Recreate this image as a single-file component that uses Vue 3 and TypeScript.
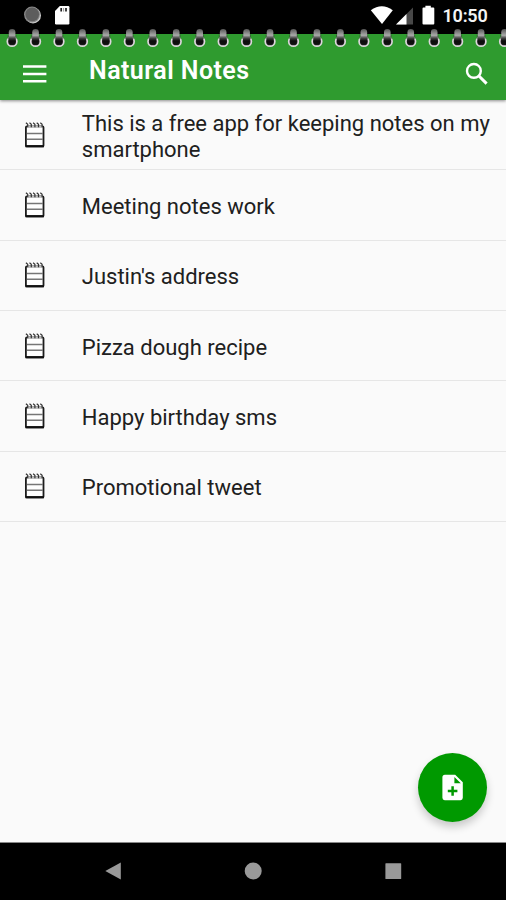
<script setup lang="ts">
const notes: string[] = [
  'This is a free app for keeping notes on my smartphone',
  'Meeting notes work',
  "Justin's address",
  'Pizza dough recipe',
  'Happy birthday sms',
  'Promotional tweet',
]
const rings: number[] = Array.from({ length: 22 }, (_, i) => 12.1 + i * 23.45)
const spikes: number[] = [3.4, 7, 10.6, 14.2, 17.8]
</script>

<template>
  <div class="screen">
    <div class="status">
      <svg class="status-left" width="80" height="34" viewBox="0 0 80 34">
        <circle cx="33" cy="15.4" r="8" fill="#d0d0d0" />
        <circle cx="32" cy="14.6" r="8" fill="#888" />
        <circle cx="32.2" cy="14.4" r="6.8" fill="#5d5d5d" />
        <path d="M59.8 6H68.2Q69.4 6 69.4 7.2V23.3Q69.4 24.5 68.2 24.5H56.2Q55 24.5 55 23.3V11Z" fill="#fff" />
        <path d="M61.2 8v3.6M66 8v3.6" stroke="#222" stroke-width="1.7" />
        <path d="M63.6 8v3.6" stroke="#999" stroke-width="1" />
      </svg>
      <svg class="status-right" width="66" height="34" viewBox="0 0 66 34">
        <path d="M.8 10.2Q11.8 2.4 22.8 10.2L12 24Z" fill="#fff" />
        <path d="M43 7.5V24.5H26Z" fill="#484848" />
        <path d="M36.5 14V24.5H26Z" fill="#fff" />
        <path d="M55.4 5.8h5.4v1.7h2.5q1 0 1 1V23.6q0 1-1 1h-9.8q-1 0-1-1V8.5q0-1 1-1H55.4Z" fill="#fff" />
      </svg>
      <span class="clock">10:50</span>
    </div>

    <header class="bar">
      <svg class="rings" width="506" height="22" viewBox="0 0 506 22">
        <defs>
          <linearGradient id="wire" x1="0" y1="0" x2="0" y2="1">
            <stop offset="0" stop-color="#555" />
            <stop offset=".4" stop-color="#aaa" />
            <stop offset=".58" stop-color="#444" />
            <stop offset=".75" stop-color="#0c0c0c" />
            <stop offset="1" stop-color="#111" />
          </linearGradient>
        </defs>
        <g v-for="x in rings" :key="x">
          <circle :cx="x" cy="13.4" r="4.8" fill="#222" stroke="#ddd5dc" stroke-width="1.7" />
          <rect :x="x - 4.4" y="6.5" width="8.8" height="4.6" fill="#3c4a3c" fill-opacity=".6" />
          <rect :x="x - 3.3" y="1" width="6.6" height="15.8" rx="3.3" fill="url(#wire)" />
        </g>
      </svg>
      <svg class="menu" width="24" height="18" viewBox="0 0 24 18">
        <path d="M0 1.5H23.4M0 8.9H23.4M0 16.3H23.4" stroke="#fff" stroke-width="2.5" />
      </svg>
      <h1 class="title">Natural Notes</h1>
      <svg class="search" width="24" height="24" viewBox="0 0 24 24">
        <circle cx="8.9" cy="8.9" r="6.9" fill="none" stroke="#fff" stroke-width="2.4" />
        <path d="M13.7 13.7L21.6 21.6" stroke="#fff" stroke-width="3" />
      </svg>
    </header>

    <main class="list">
      <div v-for="note in notes" :key="note" class="row">
        <svg class="pad" width="22" height="28" viewBox="0 0 22 28">
          <rect x="1.9" y="5.4" width="17.6" height="20" rx="1" fill="#fff" stroke="#1c1c1c" stroke-width="1.8" />
          <path d="M1.5 25.2H20" stroke="#111" stroke-width="2.2" />
          <path d="M3 12.5H19M3 18.2H19" stroke="#777" stroke-width="1.4" />
          <path d="M3.2 5.4H18.4" stroke="#bbb" stroke-width="1.9" />
          <path v-for="x in spikes" :key="x" :d="`M${x - 1.5} 1.8L${x + .3} 3.2V6.2`" fill="none" stroke="#333" stroke-width="1.2" />
        </svg>
        <span class="note">{{ note }}</span>
      </div>
      <button class="add" aria-label="Add note">
        <svg width="22" height="27" viewBox="0 0 22 27">
          <path fill-rule="evenodd" d="M2.9.7H13.2L20.8 8.3V23.8Q20.8 26.2 18.5 26.2H2.7Q.4 26.2 .4 23.8V3.2Q.4.7 2.9.7ZM12.4 2.9V9.3H18.8Z" fill="#fff" />
          <path d="M10.6 12.2v9.6M5.8 17h9.6" stroke="#090" stroke-width="2.5" />
        </svg>
      </button>
    </main>

    <nav class="nav">
      <svg width="18" height="20" viewBox="0 0 18 20"><path d="M1.3 10L16.8 1.4V18.6Z" fill="#999" /></svg>
      <svg width="18" height="20" viewBox="0 0 18 20"><circle cx="9.2" cy="10" r="8.5" fill="#999" /></svg>
      <svg width="18" height="20" viewBox="0 0 18 20"><rect x="1.4" y="2.2" width="15.8" height="15.8" rx=".6" fill="#999" /></svg>
    </nav>
  </div>
</template>

<style>
body {
  margin: 0;
}
</style>

<style scoped>
.screen {
  width: 506px;
  height: 900px;
  display: flex;
  flex-direction: column;
  overflow: hidden;
  background: #fafafa;
  font-family: Roboto, "Liberation Sans", sans-serif;
}
.status {
  height: 34px;
  flex: none;
  display: flex;
  background: #000;
}
.status-right {
  margin-left: 290px;
}
.clock {
  margin-left: 6.5px;
  color: #f4f4f4;
  font-size: 18px;
  font-weight: 600;
  line-height: 32px;
  letter-spacing: -0.2px;
}
.bar {
  position: relative;
  z-index: 1;
  box-sizing: border-box;
  height: 66px;
  flex: none;
  display: flex;
  align-items: flex-start;
  padding-left: 23px;
  background: #2f9b2f;
  box-shadow: 0 1px 3px rgba(0, 0, 0, 0.45);
}
.rings {
  position: absolute;
  left: 0;
  top: -6px;
}
.menu {
  margin-top: 31px;
}
.title {
  margin: 22px 0 0 42px;
  color: #fff;
  font-size: 25px;
  font-weight: 600;
  line-height: 29px;
  letter-spacing: 0.45px;
}
.search {
  margin: 28px 17px 0 auto;
}
.list {
  position: relative;
  flex: 1;
}
.row {
  box-sizing: border-box;
  height: 70.33px;
  display: flex;
  align-items: center;
  padding-left: 24px;
  border-bottom: 1.5px solid #e6e6e6;
}
.pad {
  flex: none;
}
.note {
  width: 420px;
  margin: 4px 0 0 35.8px;
  color: #202020;
  font-size: 22px;
  line-height: 26px;
}
.add {
  position: absolute;
  right: 19px;
  bottom: 20px;
  width: 69px;
  height: 69px;
  display: flex;
  align-items: center;
  justify-content: center;
  padding: 0;
  border: 0;
  border-radius: 50%;
  background: #090;
  box-shadow: 0 5px 9px rgba(0, 0, 0, 0.2);
}
.nav {
  height: 58px;
  flex: none;
  box-sizing: border-box;
  display: flex;
  align-items: center;
  justify-content: center;
  gap: 122px;
  padding-bottom: 1px;
  border-top: 1px solid #888;
  background: #000;
}
</style>
